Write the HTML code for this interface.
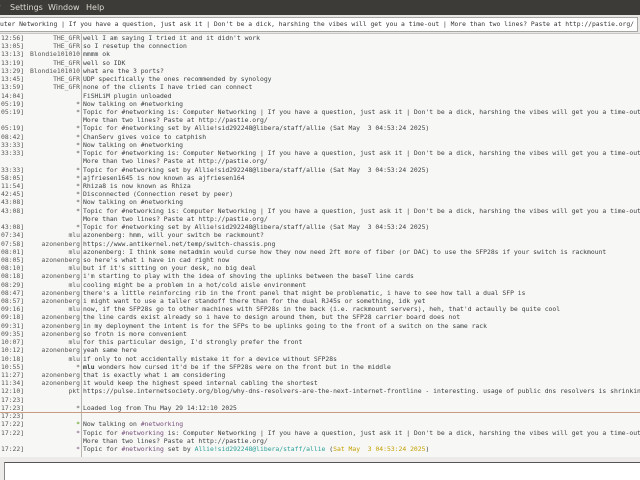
<!DOCTYPE html>
<html><head><meta charset="utf-8"><style>
*{margin:0;padding:0;box-sizing:border-box}
body{width:640px;height:480px;overflow:hidden;background:#f6f5f4;position:relative;font-family:"DejaVu Sans Mono","Liberation Mono",monospace;}
#menu{position:absolute;left:0;top:0;width:640px;height:15px;background:#3c3b37;color:#dfdbd2;font-family:"DejaVu Sans","Liberation Sans",sans-serif;font-size:8px;line-height:15px;white-space:nowrap}
#menu span{position:absolute;top:0}
#topicbg{position:absolute;left:0;top:15px;width:640px;height:19px;background:#e8e7e5}
#topic{position:absolute;left:0;top:17px;width:638px;height:15px;background:#fff;border:1px solid #a8a6a2;border-left:none;font-size:6.35px;line-height:13px;color:#333;white-space:pre;overflow:hidden}
#chat{position:absolute;left:0;top:33px;width:640px;height:424px;background:#f7f7f5;border-top:1px solid #c8c6c2}
#vl{position:absolute;left:81px;top:0;width:1px;height:424px;background:#b8b6b2}
.r{position:absolute;left:0;height:8.22px;width:640px;font-size:6.4px;line-height:8.22px;white-space:pre;color:#3a3f41}
.t{position:absolute;left:1px;color:#555}
.n{position:absolute;right:560px;text-align:right;color:#555}
.m{position:absolute;left:83px}
#sep{position:absolute;left:0;top:378px;width:640px;height:1px;background:#c99a82}
#bottom{position:absolute;left:0;top:457px;width:640px;height:23px;background:#ecebe9}
#input{position:absolute;left:4px;top:462px;width:640px;height:18px;background:#fff;border-top:1px solid #555;border-left:1px solid #888}
.g{color:#4e9a06}.p{color:#75507b}.c{color:#2aa198}.y{color:#c4a000}
</style></head><body>
<div id="menu"><span style="left:-3px">r</span><span style="left:10px">Settings</span><span style="left:48px">Window</span><span style="left:86px">Help</span></div>
<div id="topicbg"></div>
<div id="topic">uter Networking | If you have a question, just ask it | Don't be a dick, harshing the vibes will get you a time-out | More than two lines? Paste at http://pastie.org/</div>
<div id="chat">
<div id="vl"></div>
<div id="sep"></div>
<div class="r" style="top:0px"><span class="t">12:56]</span><span class="n">THE_GFR</span><span class="m">well I am saying I tried it and it didn't work</span></div>
<div class="r" style="top:8.22px"><span class="t">13:05]</span><span class="n">THE_GFR</span><span class="m">so I resetup the connection</span></div>
<div class="r" style="top:16.44px"><span class="t">13:13]</span><span class="n">Blondie101010</span><span class="m">mmmm ok</span></div>
<div class="r" style="top:24.66px"><span class="t">13:19]</span><span class="n">THE_GFR</span><span class="m">well so IDK</span></div>
<div class="r" style="top:32.88px"><span class="t">13:29]</span><span class="n">Blondie101010</span><span class="m">what are the 3 ports?</span></div>
<div class="r" style="top:41.1px"><span class="t">13:45]</span><span class="n">THE_GFR</span><span class="m">UDP specifically the ones recommended by synology</span></div>
<div class="r" style="top:49.32px"><span class="t">13:59]</span><span class="n">THE_GFR</span><span class="m">none of the clients I have tried can connect</span></div>
<div class="r" style="top:57.54px"><span class="t">14:04]</span><span class="n"></span><span class="m">FiSHLiM plugin unloaded</span></div>
<div class="r" style="top:65.76px"><span class="t">05:19]</span><span class="n">*</span><span class="m">Now talking on #networking</span></div>
<div class="r" style="top:73.98px"><span class="t">05:19]</span><span class="n">*</span><span class="m">Topic for #networking is: Computer Networking | If you have a question, just ask it | Don't be a dick, harshing the vibes will get you a time-out</span></div>
<div class="r" style="top:82.2px"><span class="m">More than two lines? Paste at http://pastie.org/</span></div>
<div class="r" style="top:90.42px"><span class="t">05:19]</span><span class="n">*</span><span class="m">Topic for #networking set by Allie!sid292248@libera/staff/allie (Sat May  3 04:53:24 2025)</span></div>
<div class="r" style="top:98.64px"><span class="t">08:42]</span><span class="n">*</span><span class="m">ChanServ gives voice to catphish</span></div>
<div class="r" style="top:106.86px"><span class="t">33:33]</span><span class="n">*</span><span class="m">Now talking on #networking</span></div>
<div class="r" style="top:115.08px"><span class="t">33:33]</span><span class="n">*</span><span class="m">Topic for #networking is: Computer Networking | If you have a question, just ask it | Don't be a dick, harshing the vibes will get you a time-out</span></div>
<div class="r" style="top:123.3px"><span class="m">More than two lines? Paste at http://pastie.org/</span></div>
<div class="r" style="top:131.52px"><span class="t">33:33]</span><span class="n">*</span><span class="m">Topic for #networking set by Allie!sid292248@libera/staff/allie (Sat May  3 04:53:24 2025)</span></div>
<div class="r" style="top:139.74px"><span class="t">58:05]</span><span class="n">*</span><span class="m">ajfriesen1645 is now known as ajfriesen164</span></div>
<div class="r" style="top:147.96px"><span class="t">11:54]</span><span class="n">*</span><span class="m">Rhiza8 is now known as Rhiza</span></div>
<div class="r" style="top:156.18px"><span class="t">42:45]</span><span class="n">*</span><span class="m">Disconnected (Connection reset by peer)</span></div>
<div class="r" style="top:164.4px"><span class="t">43:08]</span><span class="n">*</span><span class="m">Now talking on #networking</span></div>
<div class="r" style="top:172.62px"><span class="t">43:08]</span><span class="n">*</span><span class="m">Topic for #networking is: Computer Networking | If you have a question, just ask it | Don't be a dick, harshing the vibes will get you a time-out</span></div>
<div class="r" style="top:180.84px"><span class="m">More than two lines? Paste at http://pastie.org/</span></div>
<div class="r" style="top:189.06px"><span class="t">43:08]</span><span class="n">*</span><span class="m">Topic for #networking set by Allie!sid292248@libera/staff/allie (Sat May  3 04:53:24 2025)</span></div>
<div class="r" style="top:197.28px"><span class="t">07:34]</span><span class="n">mlu</span><span class="m">azonenberg: hmm, will your switch be rackmount?</span></div>
<div class="r" style="top:205.5px"><span class="t">07:58]</span><span class="n">azonenberg</span><span class="m">https://www.antikernel.net/temp/switch-chassis.png</span></div>
<div class="r" style="top:213.72px"><span class="t">08:01]</span><span class="n">mlu</span><span class="m">azonenberg: I think some netadmin would curse how they now need 2ft more of fiber (or DAC) to use the SFP28s if your switch is rackmount</span></div>
<div class="r" style="top:221.94px"><span class="t">08:05]</span><span class="n">azonenberg</span><span class="m">so here's what i have in cad right now</span></div>
<div class="r" style="top:230.16px"><span class="t">08:10]</span><span class="n">mlu</span><span class="m">but if it's sitting on your desk, no big deal</span></div>
<div class="r" style="top:238.38px"><span class="t">08:18]</span><span class="n">azonenberg</span><span class="m">i'm starting to play with the idea of shoving the uplinks between the baseT line cards</span></div>
<div class="r" style="top:246.6px"><span class="t">08:29]</span><span class="n">mlu</span><span class="m">cooling might be a problem in a hot/cold aisle environment</span></div>
<div class="r" style="top:254.82px"><span class="t">08:47]</span><span class="n">azonenberg</span><span class="m">there's a little reinforcing rib in the front panel that might be problematic, i have to see how tall a dual SFP is</span></div>
<div class="r" style="top:263.04px"><span class="t">08:57]</span><span class="n">azonenberg</span><span class="m">i might want to use a taller standoff there than for the dual RJ45s or something, idk yet</span></div>
<div class="r" style="top:271.26px"><span class="t">09:16]</span><span class="n">mlu</span><span class="m">now, if the SFP28s go to other machines with SFP28s in the back (i.e. rackmount servers), heh, that'd actaully be quite cool</span></div>
<div class="r" style="top:279.48px"><span class="t">09:18]</span><span class="n">azonenberg</span><span class="m">the line cards exist already so i have to design around them, but the SFP28 carrier board does not</span></div>
<div class="r" style="top:287.7px"><span class="t">09:31]</span><span class="n">azonenberg</span><span class="m">in my deployment the intent is for the SFPs to be uplinks going to the front of a switch on the same rack</span></div>
<div class="r" style="top:295.92px"><span class="t">09:35]</span><span class="n">azonenberg</span><span class="m">so frotn is more convenient</span></div>
<div class="r" style="top:304.14px"><span class="t">10:07]</span><span class="n">mlu</span><span class="m">for this particular design, I'd strongly prefer the front</span></div>
<div class="r" style="top:312.36px"><span class="t">10:12]</span><span class="n">azonenberg</span><span class="m">yeah same here</span></div>
<div class="r" style="top:320.58px"><span class="t">10:18]</span><span class="n">mlu</span><span class="m">if only to not accidentally mistake it for a device without SFP28s</span></div>
<div class="r" style="top:328.8px"><span class="t">10:55]</span><span class="n">*</span><span class="m"><b>mlu</b> wonders how cursed it'd be if the SFP28s were on the front but in the middle</span></div>
<div class="r" style="top:337.02px"><span class="t">11:27]</span><span class="n">azonenberg</span><span class="m">that is exactly what i am considering</span></div>
<div class="r" style="top:345.24px"><span class="t">11:34]</span><span class="n">azonenberg</span><span class="m">it would keep the highest speed internal cabling the shortest</span></div>
<div class="r" style="top:353.46px"><span class="t">12:10]</span><span class="n">pkt</span><span class="m">https://pulse.internetsociety.org/blog/why-dns-resolvers-are-the-next-internet-frontline - interesting. usage of public dns resolvers is shrinking</span></div>
<div class="r" style="top:361.68px"><span class="t">17:23]</span></div>
<div class="r" style="top:369.9px"><span class="t">17:23]</span><span class="n">*</span><span class="m">Loaded log from Thu May 29 14:12:10 2025</span></div>
<div class="r" style="top:378.12px"><span class="t">17:23]</span></div>
<div class="r" style="top:386.34px"><span class="t">17:22]</span><span class="n g">*</span><span class="m">Now talking on <span class="p">#networking</span></span></div>
<div class="r" style="top:394.56px"><span class="t">17:22]</span><span class="n p">*</span><span class="m">Topic for <span class="p">#networking</span> is: Computer Networking | If you have a question, just ask it | Don't be a dick, harshing the vibes will get you a time-out</span></div>
<div class="r" style="top:402.78px"><span class="m">More than two lines? Paste at http://pastie.org/</span></div>
<div class="r" style="top:411px"><span class="t">17:22]</span><span class="n p">*</span><span class="m">Topic for <span class="p">#networking</span> set by <span class="c">Allie!sid292248@libera/staff/allie</span> (<span class="y">Sat May  3 04:53:24 2025</span>)</span></div>
</div>
<div id="bottom"></div>
<div id="input"></div>
</body></html>
